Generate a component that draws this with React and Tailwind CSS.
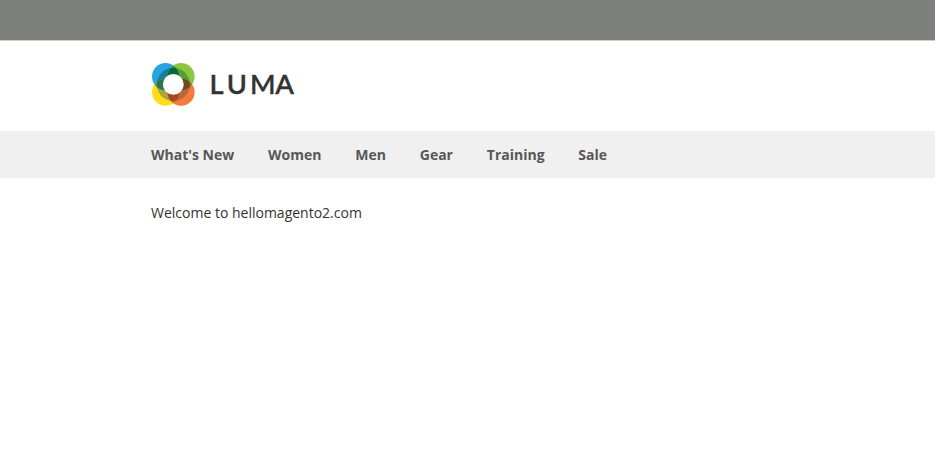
const items = ["What's New", 'Women', 'Men', 'Gear', 'Training', 'Sale'];

function Logo() {
  return (
    <svg width="146" height="46" viewBox="0 0 146 46" role="img" aria-label="Luma">
      <defs>
        <clipPath id="tl"><circle cx="15.5" cy="15.6" r="13.5" /></clipPath>
        <clipPath id="tr"><circle cx="31.1" cy="15.6" r="13.5" /></clipPath>
        <clipPath id="bl"><circle cx="15.5" cy="31.2" r="13.5" /></clipPath>
        <clipPath id="br"><circle cx="31.1" cy="31.2" r="13.5" /></clipPath>
        <clipPath id="ring"><circle cx="23.3" cy="23.4" r="16.6" /></clipPath>
      </defs>
      <circle cx="15.5" cy="15.6" r="13.5" fill="#26a5de" />
      <circle cx="31.1" cy="15.6" r="13.5" fill="#8cc63f" />
      <circle cx="15.5" cy="31.2" r="13.5" fill="#ffde17" />
      <circle cx="31.1" cy="31.2" r="13.5" fill="#f4793b" />
      <g clipPath="url(#tl)">
        <circle cx="31.1" cy="15.6" r="13.5" fill="#2d9152" />
        <circle cx="15.5" cy="31.2" r="13.5" fill="#4f9a62" />
      </g>
      <g clipPath="url(#br)">
        <circle cx="31.1" cy="15.6" r="13.5" fill="#96743a" />
        <circle cx="15.5" cy="31.2" r="13.5" fill="#d56a2c" />
      </g>
      <g clipPath="url(#ring)">
        <circle cx="15.5" cy="15.6" r="13.5" fill="#1a7d9d" />
        <circle cx="31.1" cy="15.6" r="13.5" fill="#579b3b" />
        <circle cx="15.5" cy="31.2" r="13.5" fill="#aaa53d" />
        <circle cx="31.1" cy="31.2" r="13.5" fill="#b8663b" />
        <g clipPath="url(#tl)">
          <circle cx="31.1" cy="15.6" r="13.5" fill="#00693b" />
          <circle cx="15.5" cy="31.2" r="13.5" fill="#2b7450" />
        </g>
        <g clipPath="url(#br)">
          <circle cx="31.1" cy="15.6" r="13.5" fill="#6c4b20" />
          <circle cx="15.5" cy="31.2" r="13.5" fill="#a74722" />
        </g>
      </g>
      <circle cx="23.3" cy="23.4" r="10.4" fill="#fff" />
      <text
        x="56.6 73.2 95.3 119.2"
        y="32.8"
        transform="scale(1.05 1)"
        className="fill-[#333] stroke-[#333] stroke-[0.3px] font-['Lato',sans-serif] text-[26px] font-semibold"
      >
        LUMA
      </text>
    </svg>
  );
}

export default function App() {
  return (
    <div className="min-h-screen bg-white font-['Open_Sans',sans-serif] text-sm text-[#333]">
      <div className="h-[41px] border-b border-[#ccc] bg-[#7e807b]" />
      <header className="flex h-[90px] items-start pl-[150px] pt-5">
        <Logo />
      </header>
      <nav className="flex h-[47px] items-center gap-[33.8px] bg-[#f0f0f0] pl-[151px] font-bold text-[#575757]">
        {items.map((item) => (
          <a key={item} href="#" className="whitespace-nowrap">{item}</a>
        ))}
      </nav>
      <main className="pl-[151px] pt-[25px]">
        <p>Welcome to hellomagento2.com</p>
      </main>
    </div>
  );
}
